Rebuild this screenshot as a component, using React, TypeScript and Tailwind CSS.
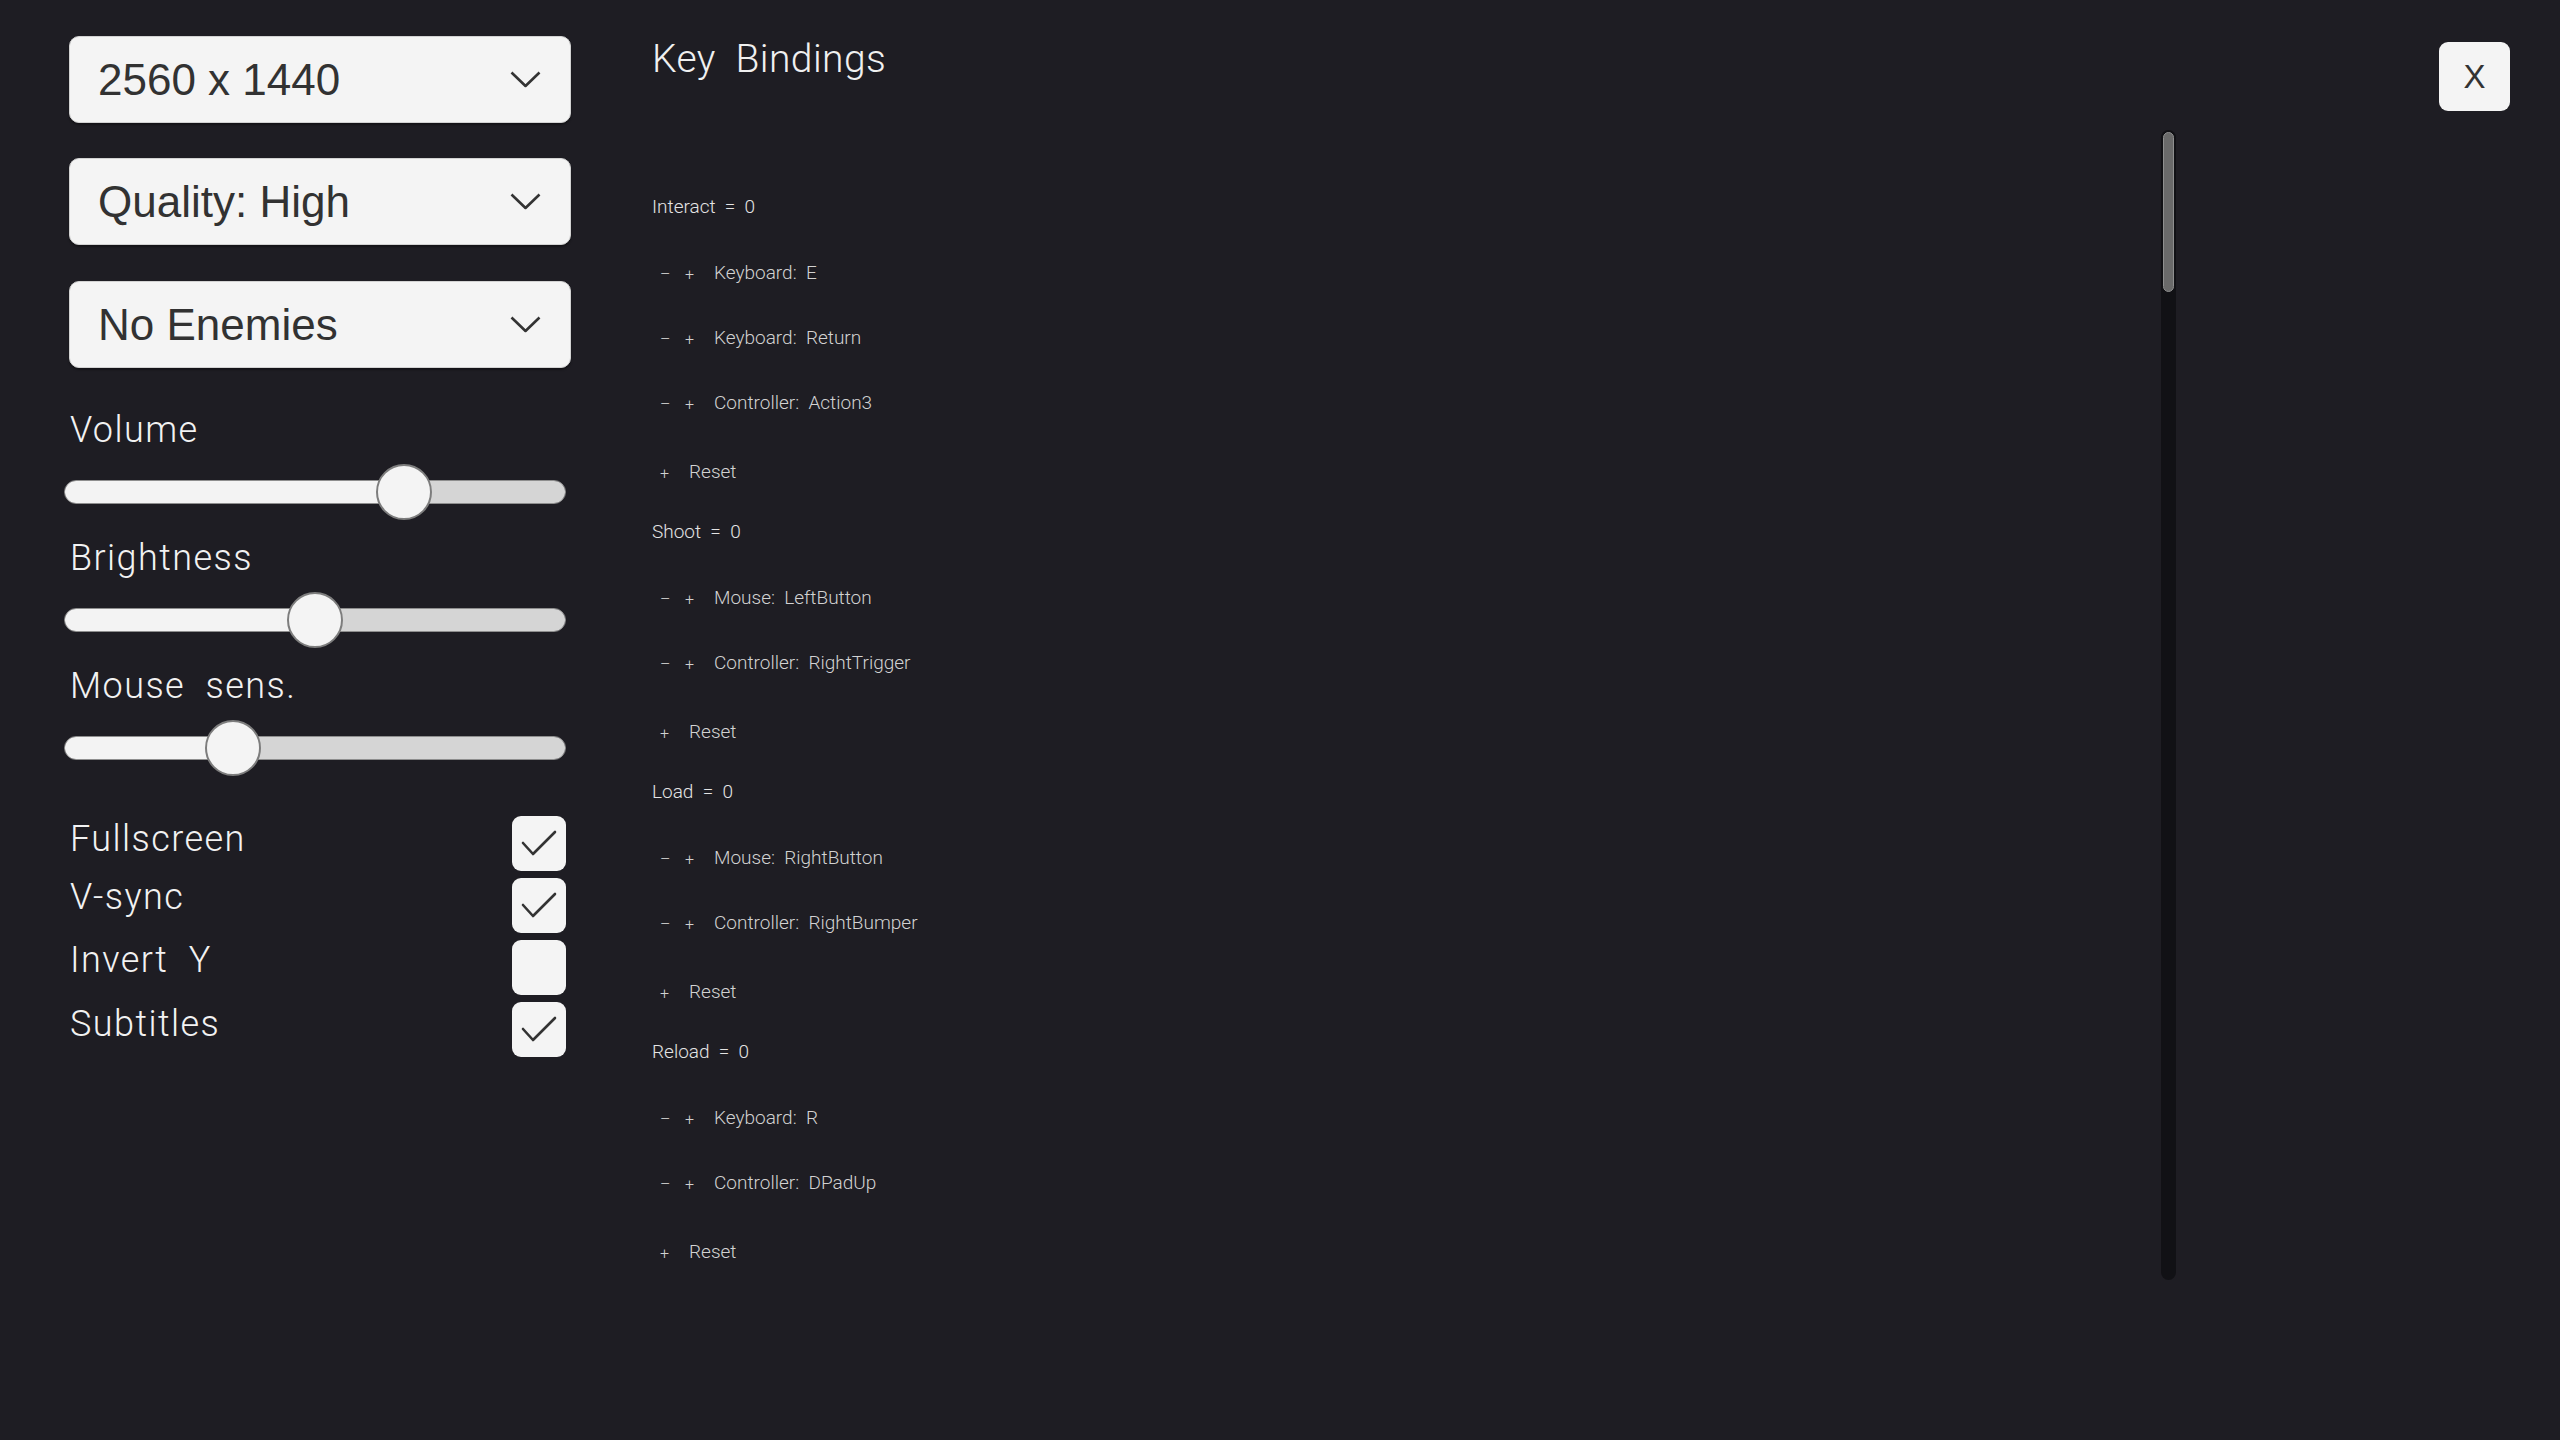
import { useState } from "react";

type Binding = { action: string; entries: string[] };

const bindings: Binding[] = [
  { action: "Interact", entries: ["Keyboard:  E", "Keyboard:  Return", "Controller:  Action3"] },
  { action: "Shoot", entries: ["Mouse:  LeftButton", "Controller:  RightTrigger"] },
  { action: "Load", entries: ["Mouse:  RightButton", "Controller:  RightBumper"] },
  { action: "Reload", entries: ["Keyboard:  R", "Controller:  DPadUp"] },
];

const Chevron = () => (
  <svg width="31" height="17" viewBox="0 0 31 17" fill="none">
    <polyline points="1.5,1.5 15.5,15 29.5,1.5" stroke="#333" strokeWidth="2.6" strokeLinejoin="round" />
  </svg>
);

const Dropdown = ({ label, className }: { label: string; className?: string }) => (
  <div
    className={`ml-[5px] flex h-[87px] w-[502px] items-center justify-between rounded-[10px] border border-[#d2d2d2] bg-[#f4f4f4] pl-[28px] pr-[29px] shadow-[0_2px_2px_rgba(0,0,0,0.35)] ${className ?? ""}`}
  >
    <span className="font-['Liberation_Sans',Arial,sans-serif] text-[44px] leading-none text-[#323232]">{label}</span>
    <Chevron />
  </div>
);

const Slider = ({ value }: { value: number }) => (
  <div className="relative mt-[16px] flex h-[56px] w-[502px] items-center">
    <div className="flex h-[24px] w-full overflow-hidden rounded-full border border-[#8e8e8e]">
      <div className="bg-[#f3f3f3]" style={{ width: `calc(28px + ${value} * (100% - 56px))` }} />
      <div className="flex-1 bg-[#d5d5d5]" />
    </div>
    <div
      className="absolute top-0 h-[56px] w-[56px] rounded-full border-2 border-[#7d7d7d] bg-[#f4f4f4]"
      style={{ left: `calc(${value} * (100% - 56px))` }}
    />
  </div>
);

const Check = () => (
  <svg width="36" height="30" viewBox="0 0 36 30" fill="none">
    <polyline points="2,14 12,25 34,3" stroke="#333" strokeWidth="2.6" strokeLinecap="round" strokeLinejoin="round" />
  </svg>
);

const Toggle = ({ label, checked, lift }: { label: string; checked: boolean; lift: string }) => (
  <div className="flex h-[55px] w-[502px] items-center justify-between">
    <span className={`${lift} whitespace-pre pl-[6px] text-[36px] leading-none tracking-[0.04em] text-[#f2f2f2]`}>
      {label}
    </span>
    <div className="flex h-[55px] w-[54px] items-center justify-center rounded-[9px] bg-[#f4f4f4]">
      {checked && <Check />}
    </div>
  </div>
);

const BindingGroup = ({ binding }: { binding: Binding }) => (
  <div className="flex flex-col">
    <div className="flex h-[65px] items-center pb-[3px] text-[19px] text-[#e4e4e4]">
      <span className="whitespace-pre">{`${binding.action}  =  0`}</span>
    </div>
    {binding.entries.map((entry) => (
      <div key={entry} className="flex h-[65px] items-center pl-[8px] text-[19px] text-[#d2d2d2]">
        <span className="w-[25px] pt-[3px] text-[16px]">–</span>
        <span className="w-[29px] pt-[3px] text-[16px]">+</span>
        <span className="whitespace-pre">{entry}</span>
      </div>
    ))}
    <div className="flex h-[65px] items-center pl-[8px] pt-[7px] text-[19px] text-[#d2d2d2]">
      <span className="w-[29px] pt-[3px] text-[16px]">+</span>
      <span>Reset</span>
    </div>
  </div>
);

export default function App() {
  const [settings] = useState({
    volume: 0.7,
    brightness: 0.5,
    sensitivity: 0.316,
  });

  const label = "h-[36px] whitespace-pre pl-[6px] text-[36px] leading-none tracking-[0.04em] text-[#f2f2f2]";

  return (
    <div className="flex h-[1440px] w-[2560px] overflow-hidden bg-[#1e1d23] font-['Roboto',sans-serif] font-light">
      {/* settings column */}
      <aside className="flex w-[571px] shrink-0 flex-col pl-[64px] pt-[36px]">
        <Dropdown label="2560 x 1440" />
        <Dropdown label="Quality: High" className="mt-[35px]" />
        <Dropdown label="No Enemies" className="mt-[36px]" />

        <div className={`mt-[44px] ${label}`}>Volume</div>
        <Slider value={settings.volume} />
        <div className={`mt-[20px] ${label}`}>Brightness</div>
        <Slider value={settings.brightness} />
        <div className={`mt-[20px] ${label}`}>{"Mouse  sens."}</div>
        <Slider value={settings.sensitivity} />

        <div className="mt-[40px] flex flex-col gap-[7px]">
          <Toggle label="Fullscreen" checked lift="mb-[10px]" />
          <Toggle label="V-sync" checked lift="mb-[18px]" />
          <Toggle label="Invert  Y" checked={false} lift="mb-[16px]" />
          <Toggle label="Subtitles" checked lift="mb-[12px]" />
        </div>
      </aside>

      {/* key bindings */}
      <main className="flex min-w-0 flex-1 flex-col pl-[81px] pt-[40px]">
        <h1 className="h-[39px] whitespace-pre text-[39px] leading-none tracking-[0.01em] text-[#f0f0f0]">
          {"Key  Bindings"}
        </h1>
        <div className="mt-[51px] flex h-[1150px]">
          <div className="flex-1 overflow-hidden pt-[46px]">
            {bindings.map((b) => (
              <BindingGroup key={b.action} binding={b} />
            ))}
          </div>
          <div className="w-[15px] rounded-full bg-[#111115] p-[2px]">
            <div className="h-[160px] rounded-full border border-[#8f8f8f] bg-[#6a6a6a]" />
          </div>
        </div>
      </main>

      <div className="flex w-[384px] shrink-0 justify-end pr-[50px] pt-[42px]">
        <button className="flex h-[69px] w-[71px] items-center justify-center rounded-[9px] bg-[#f4f4f4] font-['Liberation_Sans',Arial,sans-serif] text-[33px] leading-none text-[#333]">
          X
        </button>
      </div>
    </div>
  );
}
